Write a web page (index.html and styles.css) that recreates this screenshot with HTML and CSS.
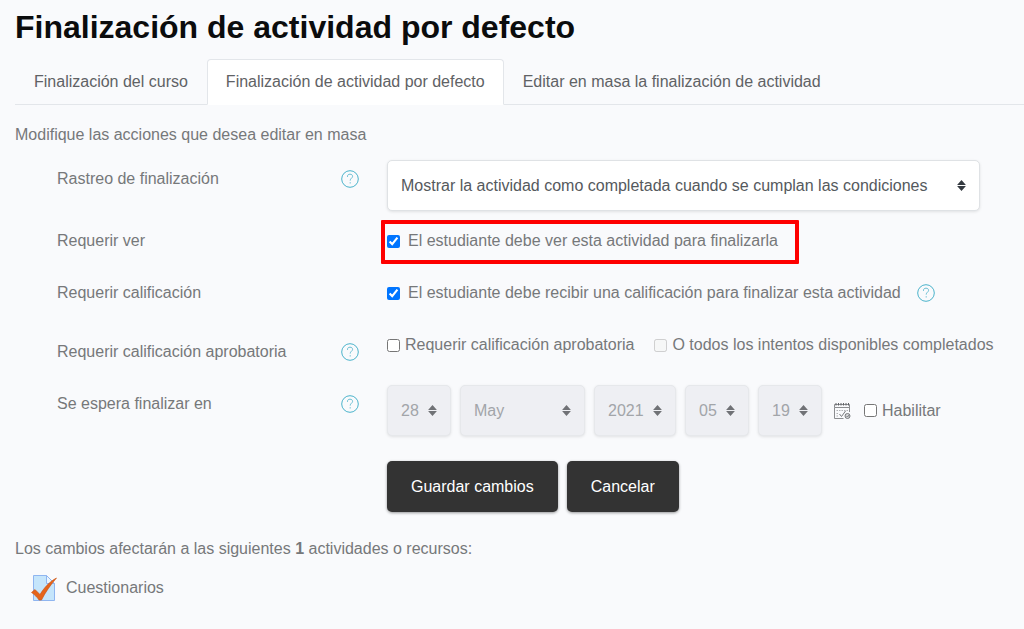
FILE: index.html
```html
<!DOCTYPE html>
<html lang="es">

<head>
    <meta charset="UTF-8">
    <meta name="viewport" content="width=device-width, initial-scale=1.0">
    <title>Finalización de actividad por defecto</title>
    <link rel="stylesheet" href="styles.css">
</head>

<body>
    <svg class="sprite" aria-hidden="true">
        <symbol id="help" viewBox="0 0 18 18">
            <circle cx="9" cy="9" r="8.3" fill="none" stroke="#4bb3cb" stroke-width="1" />
            <path d="M6.5 7V6.2C6.5 4.9 7.5 4.2 9 4.2s2.6.8 2.6 2.1c0 1.8-2.4 2-2.4 4.3M9.2 12.2v1.3" fill="none" stroke="#6bbfd3" stroke-width="1" />
        </symbol>
    </svg>

    <h1>Finalización de actividad por defecto</h1>
    <nav class="tabs">
        <a class="tab" href="#">Finalización del curso</a>
        <a class="tab active" href="#">Finalización de actividad por defecto</a>
        <a class="tab" href="#">Editar en masa la finalización de actividad</a>
    </nav>

    <main>
        <p>Modifique las acciones que desea editar en masa</p>
        <form>
            <div class="row">
                <div class="name low">
                    <label for="rastreo">Rastreo de finalización</label>
                    <a class="help" href="#" aria-label="Ayuda"><svg><use href="#help" /></svg></a>
                </div>
                <div class="field">
                    <select id="rastreo">
                        <option>Mostrar la actividad como completada cuando se cumplan las condiciones</option>
                    </select>
                </div>
            </div>
            <div class="row">
                <div class="name">Requerir ver</div>
                <div class="field">
                    <label class="check wide marked"><input type="checkbox" checked>El estudiante debe ver esta actividad para finalizarla</label>
                </div>
            </div>
            <div class="row">
                <div class="name">Requerir calificación</div>
                <div class="field">
                    <label class="check wide"><input type="checkbox" checked>El estudiante debe recibir una calificación para finalizar esta actividad</label>
                    <a class="help" href="#" aria-label="Ayuda"><svg><use href="#help" /></svg></a>
                </div>
            </div>
            <div class="row">
                <div class="name low">
                    <span>Requerir calificación aprobatoria</span>
                    <a class="help" href="#" aria-label="Ayuda"><svg><use href="#help" /></svg></a>
                </div>
                <div class="field options">
                    <label class="check"><input type="checkbox">Requerir calificación aprobatoria</label>
                    <label class="check"><input type="checkbox" disabled>O todos los intentos disponibles completados</label>
                </div>
            </div>
            <div class="row">
                <div class="name low">
                    <span>Se espera finalizar en</span>
                    <a class="help" href="#" aria-label="Ayuda"><svg><use href="#help" /></svg></a>
                </div>
                <div class="field date">
                    <select aria-label="Día" disabled><option>28</option></select>
                    <select class="month" aria-label="Mes" disabled><option>May</option></select>
                    <select aria-label="Año" disabled><option>2021</option></select>
                    <select aria-label="Hora" disabled><option>05</option></select>
                    <select aria-label="Minuto" disabled><option>19</option></select>
                    <a class="calendar" href="#" aria-label="Calendario">
                        <svg viewBox="0 0 18 18" fill="none" stroke="#8b8d90">
                            <path d="M1.500 5.500V2.500h15V10M1.500 5.500v11h9M1.500 5.500h15" />
                            <path d="M3 1v2.500M5.500 1v2.500M8 1v2.500M10.500 1v2.500M13 1v2.500M15.500 1v2.500" stroke="#606266" />
                            <path d="M3.500 8.500h12M3.500 11.500h2M3.500 14h2" stroke-dasharray="1.500 1" stroke="#b0b2b5" />
                            <path d="M6.500 12l2 2.500 4-5.500" stroke="#77797c" />
                            <circle cx="14.500" cy="14" r="2.500" fill="#d5d6d8" stroke="#77797c" />
                            <path d="M13.500 14l1 1 1.500-2" stroke="#606266" stroke-width=".7" />
                        </svg>
                    </a>
                    <label class="check"><input type="checkbox">Habilitar</label>
                </div>
            </div>
            <div class="row buttons">
                <div class="field date">
                    <button type="submit">Guardar cambios</button>
                    <button type="button">Cancelar</button>
                </div>
            </div>
        </form>
        <p>Los cambios afectarán a las siguientes <strong>1</strong> actividades o recursos:</p>
        <div class="activity">
            <svg viewBox="0 0 26 28">
                <path d="M2.5 1.5h13l8 8v17h-21z" fill="#c5e5fb" stroke="#8fb5f0" />
                <path d="M15.5 1.5v8h8z" fill="#e9f5fe" stroke="#8fb5f0" />
                <path d="M.5 18.5l3.5-3 5 5C13 14 18 8 25.5 4 19.500 11 14.500 18 10.500 26H8C6 23 3.500 20.500.5 18.500z" fill="#e5641a" stroke="#c9500f" stroke-width=".6" />
            </svg>
            <span>Cuestionarios</span>
        </div>
    </main>
</body>

</html>
```
FILE: styles.css
```css
* {
    box-sizing: border-box;
}

body {
    margin: 0;
    padding: 7px 0 0 15px;
    background: #f9fafc;
    color: #76787a;
    font: 16px/24px "Liberation Sans", Arial, sans-serif;
}

.sprite {
    position: absolute;
    width: 0;
    height: 0;
}

h1 {
    margin: 0 0 12px;
    font-size: 32px;
    line-height: 40px;
    color: #0b0c0d;
}

.tabs {
    display: flex;
    border-bottom: 1px solid #e3e6ea;
}

.tab {
    margin-bottom: -1px;
    padding: 10px 18px;
    border: 1px solid transparent;
    border-radius: 4px 4px 0 0;
    color: #5f6265;
    text-decoration: none;
}

.tab.active {
    background: #fff;
    border-color: #e3e6ea #e3e6ea #fff;
}

p {
    margin: 18px 0 13px;
}

.row {
    display: grid;
    grid-template-columns: 302px 1fr;
    column-gap: 28px;
    min-height: 34px;
    margin: 0 0 18px 42px;
}

.name {
    display: flex;
    justify-content: space-between;
    align-items: flex-start;
}

.low {
    padding-top: 7px;
}

.field {
    display: flex;
    align-items: flex-start;
    gap: 16px;
}

.field.options {
    gap: 20px;
}

.field.date {
    align-items: center;
    gap: 9px;
}

.help {
    display: block;
    height: 24px;
    padding-top: 3px;
}

.help svg {
    display: block;
    width: 18px;
    height: 18px;
}

.check {
    display: flex;
    align-items: center;
    gap: 5px;
    white-space: nowrap;
}

.check.wide {
    gap: 8px;
}

.check input {
    width: 13px;
    height: 13px;
    margin: 0;
}

/* red frame over the option */
.marked {
    position: relative;
}

.marked::after {
    content: "";
    position: absolute;
    inset: -9px -21px -11px -6px;
    border: 4px solid #fe0000;
    border-radius: 1px;
    pointer-events: none;
}

select {
    appearance: none;
    height: 51px;
    padding: 0 51px 0 13px;
    border: 1px solid #dfe2e5;
    border-radius: 5px;
    background: #fff url("data:image/svg+xml,%3Csvg xmlns='http://www.w3.org/2000/svg' viewBox='0 0 8 10'%3E%3Cpath fill='%23343a40' d='M4 0L0 4.500h8zM4 10L0 5.500h8z'/%3E%3C/svg%3E") no-repeat right 13px center / 9px 11px;
    box-shadow: 0 1px 3px rgba(0, 0, 0, .1);
    color: #55595d;
    font: inherit;
}

select:disabled {
    padding-right: 31px;
    background-color: #eeeff3;
    background-image: url("data:image/svg+xml,%3Csvg xmlns='http://www.w3.org/2000/svg' viewBox='0 0 8 10'%3E%3Cpath fill='%23707276' d='M4 0L0 4.500h8zM4 10L0 5.500h8z'/%3E%3C/svg%3E");
    border-color: #e6e8eb;
    color: #a2a5a9;
    opacity: 1;
}

select.month {
    width: 125px;
}

.calendar {
    margin: 0 4px 0 2px;
}

.calendar svg {
    display: block;
    width: 18px;
    height: 18px;
}

.buttons {
    margin-top: 25px;
    margin-bottom: 25px;
}

.buttons .field {
    grid-column: 2;
}

button {
    height: 51px;
    padding: 0 24px;
    border: 0;
    border-radius: 5px;
    background: #333;
    box-shadow: 0 1px 3px rgba(0, 0, 0, .4);
    color: #fff;
    font: inherit;
}

.activity {
    display: flex;
    align-items: center;
    gap: 9px;
    padding-left: 16px;
}

.activity svg {
    width: 26px;
    height: 28px;
}
```
